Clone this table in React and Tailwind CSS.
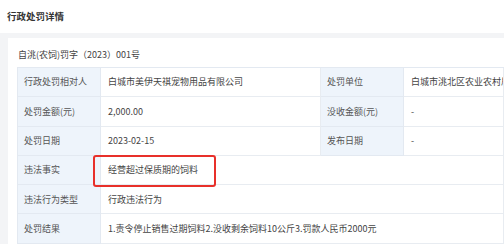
import React from "react";

const font = { fontFamily: '"Noto Sans CJK SC", "Noto Sans", sans-serif' };

function Label({ children }) {
  return (
    <div className="bg-[#eef4fb] flex items-center pl-[6px] text-[#555] border-r border-b border-[#e3e9f1]">
      {children}
    </div>
  );
}

function Value({ children, className = "" }) {
  return (
    <div className={"flex items-center pl-[7px] text-[#444] border-b border-r border-[#e8ecf1] whitespace-nowrap overflow-hidden " + className}>
      {children}
    </div>
  );
}

export default function App() {
  return (
    <div style={font} className="w-[504px] h-[244px] overflow-hidden bg-[#f3f4f6] relative text-[9px]">
      <div className="h-[33px] bg-white flex items-center pl-[7px] text-[9.5px] font-bold text-[#333]">
        行政处罚详情
      </div>
      <div className="pl-[8px] pt-[5px]">
        <div className="bg-white pl-[9px]">
          <div className="h-[29px] pt-[4px] flex items-center pl-[1px] text-[#444]">
            自洮(农饲)罚字（2023）001号
          </div>
          <div className="grid grid-cols-[83px_220px_83px_1fr] auto-rows-[29.3px] border-t border-l border-[#e3e9f1]">
            <Label>行政处罚相对人</Label>
            <Value className="text-[#2a7bd6]">白城市美伊天祺宠物用品有限公司</Value>
            <Label>处罚单位</Label>
            <Value>白城市洮北区农业农村局</Value>

            <Label>处罚金额(元)</Label>
            <Value>2,000.00</Value>
            <Label>没收金额(元)</Label>
            <Value>-</Value>

            <Label>处罚日期</Label>
            <Value>2023-02-15</Value>
            <Label>发布日期</Label>
            <Value>-</Value>

            <Label>违法事实</Label>
            <Value className="col-span-3">经营超过保质期的饲料</Value>

            <Label>违法行为类型</Label>
            <Value className="col-span-3">行政违法行为</Value>

            <Label>处罚结果</Label>
            <Value className="col-span-3">1.责令停止销售过期饲料2.没收剩余饲料10公斤3.罚款人民币2000元</Value>
          </div>
        </div>
      </div>
      <div className="absolute left-[93px] top-[155px] w-[123px] h-[32px] border-2 border-[#e8302a] rounded-[3px]"></div>
    </div>
  );
}
